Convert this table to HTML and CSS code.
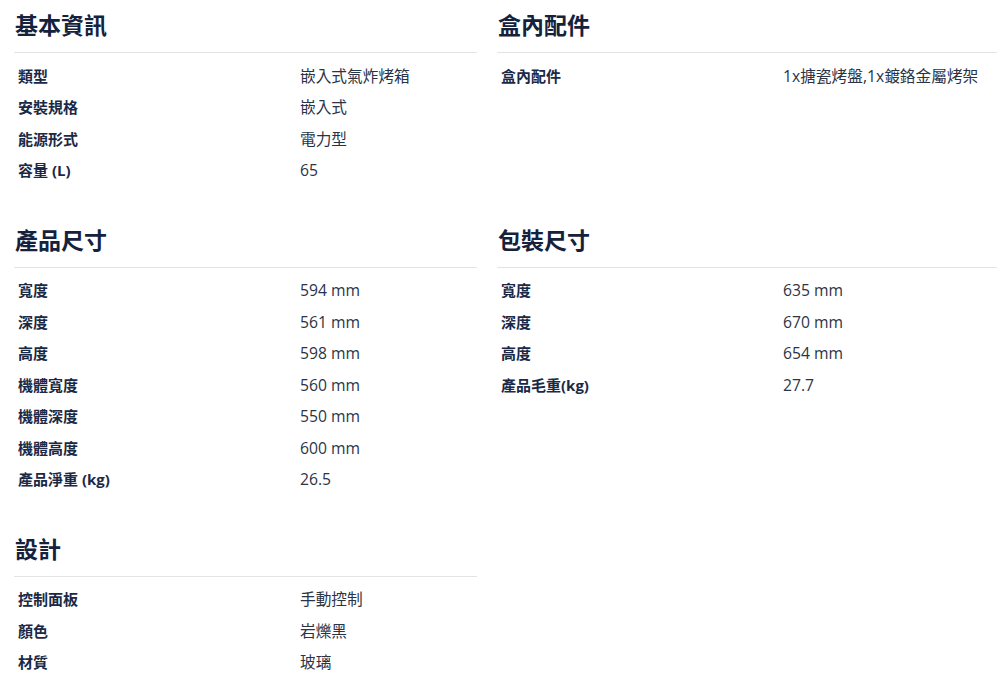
FILE: index.html
```html
<!DOCTYPE html>
<html lang="zh-Hant">
<head>
<meta charset="utf-8">
<title>規格</title>
<link rel="stylesheet" href="styles.css">
</head>
<body>
<div class="specs">
  <section class="sec">
    <h2 class="sec-title">基本資訊</h2>
    <div class="rows">
      <div class="row"><span class="k">類型</span><span class="v">嵌入式氣炸烤箱</span></div>
      <div class="row"><span class="k">安裝規格</span><span class="v">嵌入式</span></div>
      <div class="row"><span class="k">能源形式</span><span class="v">電力型</span></div>
      <div class="row"><span class="k">容量 (L)</span><span class="v">65</span></div>
    </div>
  </section>
  <section class="sec">
    <h2 class="sec-title">盒內配件</h2>
    <div class="rows">
      <div class="row"><span class="k">盒內配件</span><span class="v">1x搪瓷烤盤,1x鍍鉻金屬烤架</span></div>
    </div>
  </section>
  <section class="sec">
    <h2 class="sec-title">產品尺寸</h2>
    <div class="rows">
      <div class="row"><span class="k">寬度</span><span class="v">594 mm</span></div>
      <div class="row"><span class="k">深度</span><span class="v">561 mm</span></div>
      <div class="row"><span class="k">高度</span><span class="v">598 mm</span></div>
      <div class="row"><span class="k">機體寬度</span><span class="v">560 mm</span></div>
      <div class="row"><span class="k">機體深度</span><span class="v">550 mm</span></div>
      <div class="row"><span class="k">機體高度</span><span class="v">600 mm</span></div>
      <div class="row"><span class="k">產品淨重 (kg)</span><span class="v">26.5</span></div>
    </div>
  </section>
  <section class="sec">
    <h2 class="sec-title">包裝尺寸</h2>
    <div class="rows">
      <div class="row"><span class="k">寬度</span><span class="v">635 mm</span></div>
      <div class="row"><span class="k">深度</span><span class="v">670 mm</span></div>
      <div class="row"><span class="k">高度</span><span class="v">654 mm</span></div>
      <div class="row"><span class="k">產品毛重(kg)</span><span class="v">27.7</span></div>
    </div>
  </section>
  <section class="sec">
    <h2 class="sec-title">設計</h2>
    <div class="rows">
      <div class="row"><span class="k">控制面板</span><span class="v">手動控制</span></div>
      <div class="row"><span class="k">顏色</span><span class="v">岩爍黑</span></div>
      <div class="row"><span class="k">材質</span><span class="v">玻璃</span></div>
    </div>
  </section>
</div>
</body>
</html>
```
FILE: styles.css
```css
html, body {
  margin: 0;
  padding: 0;
  background: #ffffff;
}
body {
  font-family: "Open Sans", "Noto Sans CJK TC", sans-serif;
  color: #1c2a45;
}
.specs {
  display: grid;
  grid-template-columns: 463px 500px;
  column-gap: 20px;
  align-items: start;
  padding: 9px 3px 0 14px;
}
.sec {
  margin-bottom: 37px;
}
.sec-title {
  margin: 0;
  padding: 0 0 11px 1px;
  font-size: 23px;
  line-height: 32px;
  font-weight: 700;
  color: #14223d;
  border-bottom: 1px solid #e3e4e7;
}
.rows {
  padding-top: 7.5px;
}
.row {
  display: grid;
  grid-template-columns: 282px 1fr;
  align-items: baseline;
  padding-left: 4px;
  font-size: 15px;
  line-height: 31.5px;
  white-space: nowrap;
}
.k {
  font-weight: 700;
  color: #1a2946;
}
.v {
  font-size: 15.7px;
  font-weight: 400;
  color: #2b3447;
}
```
